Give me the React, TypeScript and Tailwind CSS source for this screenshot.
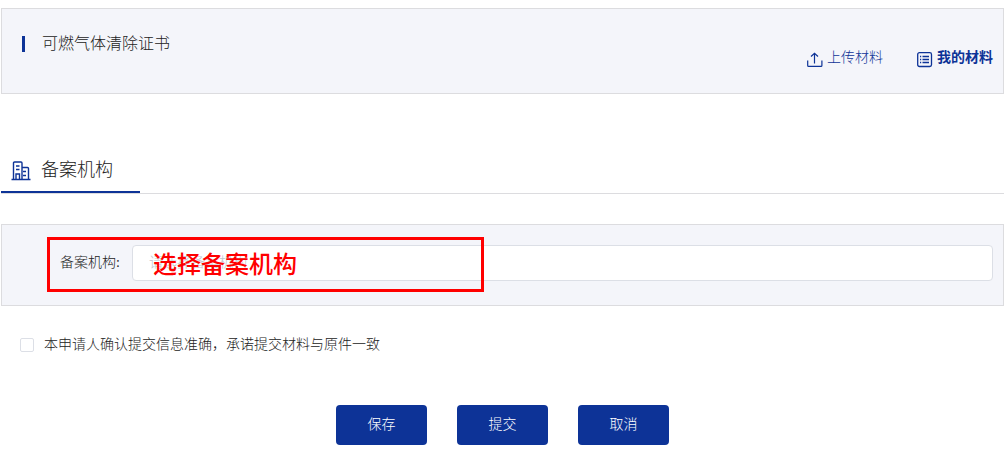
const UploadIcon = () => (
  <svg width="16" height="16" viewBox="0 0 16 16" fill="none" stroke="currentColor" strokeWidth="1.2" aria-hidden="true">
    <path d="M.7 8.500v5q0 .9.9.9h12.400q.9 0 .9-.9v-5" />
    <path d="M7.500 11.500V1.500M4 4.500l3.500-3.300L11 4.500" />
  </svg>
)

const ListIcon = () => (
  <svg width="16" height="16" viewBox="0 0 16 16" fill="none" stroke="currentColor" strokeWidth="1.3" aria-hidden="true">
    <rect x=".7" y=".7" width="13.800" height="13.800" rx="1.800" />
    <path d="M3 4.500h1.200M5.500 4.500H12M3 7.500h1.200M5.500 7.500H12M3 10.500h1.200M5.500 10.500H12" />
  </svg>
)

const BuildingIcon = () => (
  <svg width="20" height="20" viewBox="0 0 20 20" fill="none" stroke="currentColor" strokeWidth="1.4" aria-hidden="true">
    <path d="M.5 18.500h19M2.500 18.500V2q0-1 1-1h6.500q1 0 1 1v16.500M11 6.500h5.500q1 0 1 1v11" />
    <path d="M5 5h3.500M5 8.500h3.500M12 10.500h3M12 14.500h3M5 18.500v-5.500h3.500v5.500" />
  </svg>
)

const actions = ["保存", "提交", "取消"]

const App = () => {
  return (
    <main className="pt-2 pr-0.5 pl-px text-sm text-[#222] font-['Liberation_Serif','Noto_Sans_CJK_SC',serif]">
      {/* Header */}
      <header className="flex justify-between border border-[#dcdcdf] bg-[#f4f5fa] pt-[23px] pr-2.5 pb-[25px] pl-5">
        <div className="flex h-6 items-center">
          <span className="h-4 w-[3px] bg-[#0d3397]" />
          <h1 className="ml-[17px] text-base leading-5 font-light">可燃气体清除证书</h1>
        </div>
        <nav className="mt-4 flex gap-[34px] text-[#0d3397]">
          <a href="#upload" className="flex items-center gap-1 font-light">
            <span className="mt-1">
              <UploadIcon />
            </span>
            上传材料
          </a>
          <a href="#mine" className="flex items-center gap-1 font-bold">
            <span className="mt-1">
              <ListIcon />
            </span>
            我的材料
          </a>
        </nav>
      </header>

      {/* Section tab */}
      <div className="mt-14 flex border-b border-[#dcdcdf]">
        <h2 className="flex w-[139px] items-center gap-2.5 border-b-2 border-[#0d3397] pt-1.5 pb-[7px] pl-2.5 text-lg leading-7 font-light">
          <span className="pt-0.5 text-[#0d3397]">
            <BuildingIcon />
          </span>
          备案机构
        </h2>
      </div>

      <form onSubmit={(e) => e.preventDefault()}>
        <div className="relative mt-[30px] flex items-center border border-[#dcdcdf] bg-[#f4f5fa] pt-5 pr-2.5 pb-6">
          <label htmlFor="agency" className="w-[130px] pr-3 text-right font-light">
            备案机构:
          </label>
          <input
            id="agency"
            type="text"
            placeholder="请选择备案机构"
            className="h-9 min-w-0 flex-1 rounded border border-[#dcdfe6] bg-white px-4 font-light placeholder:text-[#c0c4cc]"
          />
          {/* Callout over the field */}
          <div className="pointer-events-none absolute top-3 left-[45px] flex h-[55px] w-[437px] items-center border-[3px] border-[#ff0000] pb-1 pl-[103px] font-['Noto_Sans_CJK_SC',sans-serif] text-2xl font-medium text-[#ff0000]">
            选择备案机构
          </div>
        </div>

        <label className="mt-[29px] ml-[19px] flex items-center gap-2.5 font-light">
          <input
            type="checkbox"
            className="size-[14px] appearance-none rounded-xs border border-[#dcdfe6] bg-white checked:bg-[#0d3397]"
          />
          本申请人确认提交信息准确，承诺提交材料与原件一致
        </label>

        <div className="mt-[50px] flex justify-center gap-[30px]">
          {actions.map((action) => (
            <button
              key={action}
              type={action === "提交" ? "submit" : "button"}
              className="h-10 w-[91px] rounded bg-[#0d3397] font-light text-white"
            >
              {action}
            </button>
          ))}
        </div>
      </form>
    </main>
  )
}

export default App
